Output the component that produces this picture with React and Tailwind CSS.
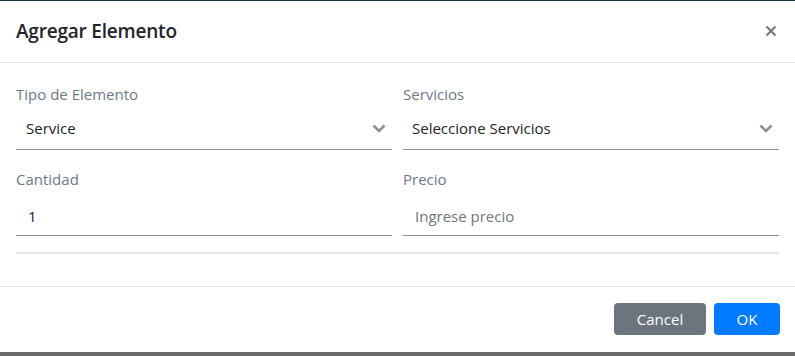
import React from 'react'

function Chevron() {
  return (
    <svg width="14" height="9" viewBox="0 0 14 9" className="shrink-0">
      <path d="M1.5 1.5 L7 7 L12.5 1.5" fill="none" stroke="#8f8f8f" strokeWidth="2.6" />
    </svg>
  )
}

function Field({ label, children }) {
  return (
    <div className="flex flex-col">
      <label className="h-[22px] leading-[22px] text-[15px] text-[#6c7a89]">{label}</label>
      {children}
    </div>
  )
}

export default function App() {
  const font = { fontFamily: '"Open Sans", "Noto Sans", sans-serif' }
  return (
    <div className="w-[795px] h-[356px] bg-white flex flex-col overflow-hidden" style={font}>
      <div className="h-px bg-[#0c3b45]" />
      {/* Header */}
      <div className="h-[63px] flex items-center justify-between pl-4 pr-[18px] border-b border-[#dee2e6] -mt-px">
        <h5 className="text-[19px] font-semibold text-[#212529] tracking-[-0.2px]">Agregar Elemento</h5>
        <svg width="12" height="12" viewBox="0 0 12 12">
          <path d="M1.5 1.5 L10.5 10.5 M10.5 1.5 L1.5 10.5" stroke="#7a7a7a" strokeWidth="2.2" />
        </svg>
      </div>

      {/* Body */}
      <div className="px-4 pt-[20px]">
        <div className="grid grid-cols-2 gap-x-[11px]">
          <Field label="Tipo de Elemento">
            <div className="flex items-center justify-between pl-[10px] pr-[6px] pt-[12px] pb-[10px] border-b border-[#8f8f8f] text-[15px] leading-[22px] text-[#212529]">
              <span>Service</span>
              <Chevron />
            </div>
          </Field>
          <Field label="Servicios">
            <div className="flex items-center justify-between pl-[9px] pr-[6px] pt-[12px] pb-[10px] border-b border-[#8f8f8f] text-[15px] leading-[22px] text-[#212529]">
              <span>Seleccione Servicios</span>
              <Chevron />
            </div>
          </Field>
        </div>
        <div className="grid grid-cols-2 gap-x-[11px] mt-[18px]">
          <Field label="Cantidad">
            <div className="pl-[12px] pt-[15px] pb-[8px] border-b border-[#8f8f8f] text-[15px] leading-[22px] text-[#212529]">1</div>
          </Field>
          <Field label="Precio">
            <div className="pl-[12px] pt-[15px] pb-[8px] border-b border-[#8f8f8f] text-[15px] leading-[22px] text-[#6c757d]">Ingrese precio</div>
          </Field>
        </div>
        <div className="mt-[16px] h-[2px] bg-[#e6e6e6]" />
      </div>

      {/* Footer */}
      <div className="mt-[32px] border-t border-[#dee2e6] flex justify-end gap-2 pt-4 pr-[15px] h-[66px]">
        <button className="h-8 w-[92px] rounded bg-[#6c757d] text-white text-[15px]">Cancel</button>
        <button className="h-8 w-[66px] rounded bg-[#007bff] text-white text-[15px]">OK</button>
      </div>
      <div className="flex-1 bg-[#6b6b6b]" />
    </div>
  )
}
